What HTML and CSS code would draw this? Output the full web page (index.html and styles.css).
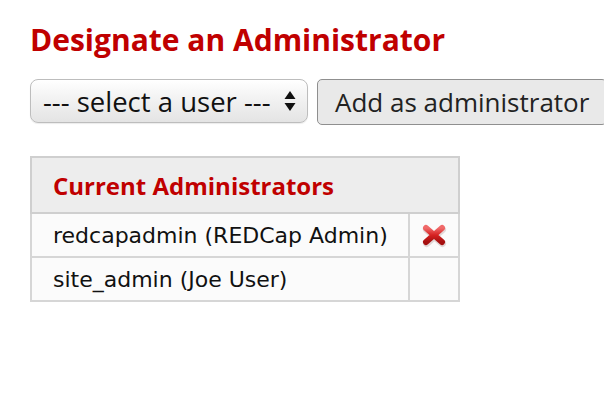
FILE: index.html
```html
<!DOCTYPE html>
<html>
<head>
<meta charset="utf-8">
<link rel="stylesheet" href="styles.css">
</head>
<body>
<div class="page">
  <h1 class="title">Designate an Administrator</h1>
  <div class="controls">
    <div class="select">
      <span class="select-text">--- select a user ---</span>
      <svg class="arrows" width="12" height="22" viewBox="0 0 12 22"><path d="M6 1 L11.5 9 L0.5 9 Z M6 21 L11.5 13 L0.5 13 Z" fill="#111"/></svg>
    </div>
    <button class="btn">Add as administrator</button>
  </div>
  <table class="admins">
    <thead>
      <tr><th colspan="2">Current Administrators</th></tr>
    </thead>
    <tbody>
      <tr>
        <td class="name">redcapadmin (REDCap Admin)</td>
        <td class="act">
          <svg width="28" height="28" viewBox="0 0 28 28">
            <defs>
              <linearGradient id="rg" x1="0" y1="0" x2="0" y2="1">
                <stop offset="0" stop-color="#f06a6a"/>
                <stop offset="0.5" stop-color="#d72222"/>
                <stop offset="1" stop-color="#a50f0f"/>
              </linearGradient>
            </defs>
            <path d="M6 7 L22 21 M22 7 L6 21" stroke="#c9b3b3" stroke-opacity="0.5" stroke-width="7" stroke-linecap="round" transform="translate(0.5 1.5)"/>
            <path d="M6 7 L22 21 M22 7 L6 21" stroke="url(#rg)" stroke-width="6" stroke-linecap="round"/>
          </svg>
        </td>
      </tr>
      <tr>
        <td class="name">site_admin (Joe User)</td>
        <td class="act"></td>
      </tr>
    </tbody>
  </table>
</div>
</body>
</html>
```
FILE: styles.css
```css
html, body {
  margin: 0;
  padding: 0;
  background: #fff;
  overflow: hidden;
}
.page {
  padding: 20px 0 0 30px;
  font-family: "Open Sans", sans-serif;
}
.title {
  margin: 0;
  font-size: 30px;
  line-height: 40px;
  font-weight: 700;
  color: #c00000;
}
.controls {
  display: flex;
  gap: 9px;
  margin-top: 19px;
  white-space: nowrap;
}
.select {
  flex-shrink: 0;
  box-sizing: border-box;
  width: 278px;
  height: 44px;
  border: 1px solid #bdbdbd;
  border-radius: 8px;
  background: linear-gradient(#ffffff 0%, #f2f2f2 45%, #e4e4e4 100%);
  box-shadow: inset 0 1px 1px rgba(255,255,255,0.9), 0 1px 1px rgba(0,0,0,0.08);
  display: flex;
  align-items: center;
  justify-content: space-between;
  padding: 0 11px 0 12px;
  font-size: 27.5px;
  color: #111;
}
.btn {
  flex-shrink: 0;
  box-sizing: border-box;
  height: 46px;
  padding: 0 17px;
  border: 1px solid #8f8f8f;
  border-radius: 5px;
  background: #e9e9e9;
  font-family: "Open Sans", sans-serif;
  font-size: 26px;
  color: #222;
}
.admins {
  margin-top: 31px;
  border-collapse: collapse;
  width: 430px;
}
.admins th {
  background: #ededed;
  border: 2px solid #cfcfcf;
  text-align: left;
  color: #c00000;
  font-size: 24px;
  font-weight: 700;
  height: 54px;
  padding: 0 0 0 21px;
}
.admins td {
  background: #fbfbfb;
  border: 2px solid #d6d6d6;
  height: 42px;
  padding: 0;
  font-family: "DejaVu Sans", sans-serif;
  font-size: 22px;
  color: #111;
}
.admins td.name {
  padding-left: 21px;
}
.admins td.act {
  width: 48px;
  text-align: center;
  vertical-align: middle;
}
.admins td.act svg {
  display: block;
  margin: 0 auto;
}
```
